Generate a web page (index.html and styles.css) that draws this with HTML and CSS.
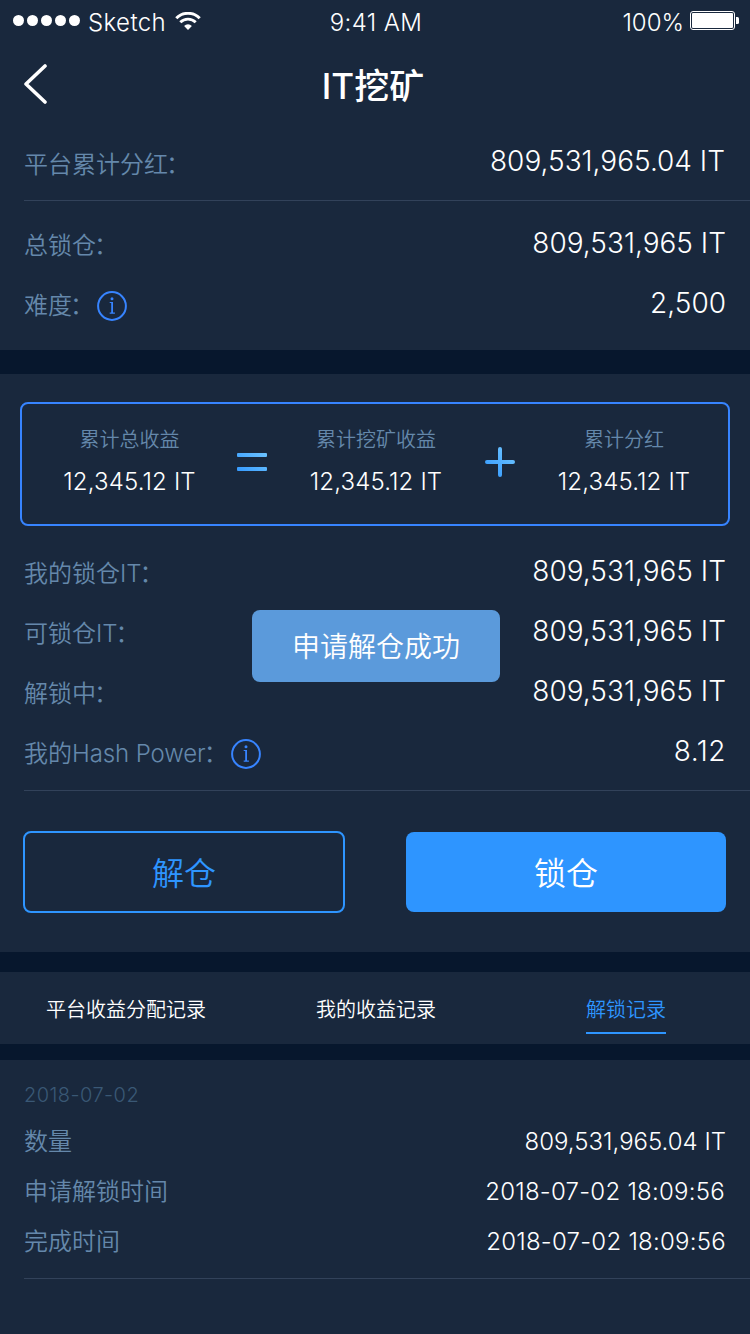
FILE: index.html
```html
<!DOCTYPE html>
<html lang="zh-CN">
<head>
<meta charset="utf-8">
<title>IT挖矿</title>
<link rel="stylesheet" href="styles.css">
</head>
<body>
<div class="app">
  <section class="panel overview">
    <div class="status-bar">
      <div class="carrier">
        <span class="signal"><i></i><i></i><i></i><i></i><i></i></span>
        <span class="carrier-name">Sketch</span>
        <svg class="wifi" width="26" height="18" viewBox="0 0 26 18">
          <path d="M1.3 6.2a16.5 16.5 0 0 1 23.4 0" fill="none" stroke="#fff" stroke-width="3"/>
          <path d="M5.3 10.3a10.9 10.9 0 0 1 15.4 0" fill="none" stroke="#fff" stroke-width="2.8"/>
          <path d="M13 18l-3.9-4.1a5.6 5.6 0 0 1 7.8 0z" fill="#fff"/>
        </svg>
      </div>
      <div class="time">9:41 AM</div>
      <div class="power">
        <span class="power-text">100%</span>
        <svg width="49" height="19" viewBox="0 0 49 19">
          <rect x=".5" y=".5" width="44" height="18" rx="2.5" fill="none" stroke="#fff"/>
          <rect x="2" y="2" width="41" height="15" rx="1" fill="#fff"/>
          <path d="M46 6h1.500q1.500 0 1.500 1.500v4q0 1.500-1.500 1.500h-1.500z" fill="#fff"/>
        </svg>
      </div>
    </div>
    <header class="nav">
      <svg class="back" width="26" height="42" viewBox="0 0 26 42">
        <path d="M23 2L4 20l19 18" fill="none" stroke="#fff" stroke-width="3.600" stroke-linecap="round" stroke-linejoin="round"/>
      </svg>
      <h1 class="title">IT挖矿</h1>
    </header>
    <div class="row row-total"><span class="label">平台累计分红<span class="colon">：</span></span><span class="value">809,531,965.04 IT</span></div>
    <hr class="divider">
    <div class="rows rows-lock">
      <div class="row"><span class="label">总锁仓<span class="colon">：</span></span><span class="value">809,531,965 IT</span></div>
      <div class="row"><span class="label">难度<span class="colon">：</span><svg class="info" width="30" height="30" viewBox="0 0 30 30"><circle cx="15" cy="15" r="13.900"/><path d="M12.700 11h3.300v10.600h1.900v1.100h-5.200v-1.100h1.500v-9.500h-1.500zM13.500 7.700a1.500 1.500 0 1 0 3 0 1.500 1.500 0 1 0-3 0z"/></svg></span><span class="value">2,500</span></div>
    </div>
  </section>

  <section class="panel account">
    <div class="formula">
      <div class="term term-first"><span class="term-label">累计总收益</span><span class="term-value">12,345.12 IT</span></div>
      <svg class="op" width="30" height="30" viewBox="0 0 30 30">
        <defs><linearGradient id="blue" x1="0" y1="30" x2="30" y2="0" gradientUnits="userSpaceOnUse"><stop offset="0" stop-color="#2e95ff"/><stop offset="1" stop-color="#74c9ff"/></linearGradient></defs>
        <path d="M1 6h28a1 1 0 0 1 1 1v2a1 1 0 0 1-1 1H1a1 1 0 0 1-1-1V7a1 1 0 0 1 1-1zM1 20h28a1 1 0 0 1 1 1v2a1 1 0 0 1-1 1H1a1 1 0 0 1-1-1v-2a1 1 0 0 1 1-1z" fill="url(#blue)"/>
      </svg>
      <div class="term"><span class="term-label">累计挖矿收益</span><span class="term-value">12,345.12 IT</span></div>
      <svg class="op" width="30" height="30" viewBox="0 0 30 30">
        <path d="M15 2v26M2 15h26" fill="none" stroke="url(#blue)" stroke-width="4" stroke-linecap="round"/>
      </svg>
      <div class="term"><span class="term-label">累计分红</span><span class="term-value">12,345.12 IT</span></div>
    </div>
    <div class="rows">
      <div class="row"><span class="label">我的锁仓IT<span class="colon">：</span></span><span class="value">809,531,965 IT</span></div>
      <div class="row"><span class="label">可锁仓IT<span class="colon">：</span></span><span class="value">809,531,965 IT</span></div>
      <div class="row"><span class="label">解锁中<span class="colon">：</span></span><span class="value">809,531,965 IT</span></div>
      <div class="row"><span class="label">我的<span class="hash">Hash Power</span><span class="colon">：</span><svg class="info" width="30" height="30" viewBox="0 0 30 30"><circle cx="15" cy="15" r="13.900"/><path d="M12.700 11h3.300v10.600h1.900v1.100h-5.200v-1.100h1.500v-9.500h-1.500zM13.500 7.700a1.500 1.500 0 1 0 3 0 1.500 1.500 0 1 0-3 0z"/></svg></span><span class="value rate">8.12</span></div>
      <div class="toast">申请解仓成功</div>
    </div>
    <hr class="divider account-divider">
    <div class="actions">
      <button class="btn btn-outline">解仓</button>
      <button class="btn btn-solid">锁仓</button>
    </div>
  </section>

  <nav class="panel tabs">
    <a class="tab">平台收益分配记录</a>
    <a class="tab">我的收益记录</a>
    <a class="tab active">解锁记录</a>
  </nav>

  <section class="panel records">
    <div class="date">2018-07-02</div>
    <div class="record"><span class="label">数量</span><span class="record-value amount">809,531,965.04 IT</span></div>
    <div class="record"><span class="label">申请解锁时间</span><span class="record-value stamp applied">2018-07-02 18:09:56</span></div>
    <div class="record"><span class="label">完成时间</span><span class="record-value stamp">2018-07-02 18:09:56</span></div>
    <hr class="divider records-divider">
  </section>
</div>
</body>
</html>
```
FILE: styles.css
```css
* { box-sizing: border-box; }
body {
  margin: 0;
  background: #07172d;
  color: #fff;
  font-family: Inter, "Noto Sans CJK SC", sans-serif;
  font-weight: 350;
}
.app { width: 750px; height: 1334px; overflow: hidden; display: flex; flex-direction: column; }
.panel { background: #19283d; flex: none; }
.divider { height: 1px; border: 0; margin: 0 0 0 24px; background: #32425a; }

.status-bar {
  height: 41px;
  padding: 0 11px 0 13px;
  display: grid;
  grid-template-columns: 1fr auto 1fr;
  font-size: 24px;
  line-height: 46px;
}
.carrier { display: flex; align-items: center; }
.signal { display: flex; gap: 3px; margin-right: 8px; }
.signal i { width: 11px; height: 11px; border-radius: 50%; background: #fff; }
.carrier-name { height: 41px; width: 87px; letter-spacing: .4px; }
.time { height: 41px; letter-spacing: .4px; }
.power { display: flex; align-items: center; justify-content: flex-end; gap: 6px; }
.power-text { height: 41px; }

.nav { height: 87px; padding: 0 24px; display: grid; grid-template-columns: 40px 1fr 40px; align-items: center; }
.back { margin-left: -2px; }
.title { margin: 2px 4px 0 0; font-size: 35px; line-height: 50px; font-weight: 500; text-align: center; }

.overview { height: 350px; margin-bottom: 24px; }
.row { height: 60px; padding: 0 24px; display: flex; justify-content: space-between; align-items: center; }
.row-total { height: 72px; padding-bottom: 7px; }
.rows-lock { padding-top: 12px; }
.label { display: flex; align-items: center; font-size: 24px; line-height: 34px; color: #6588ab; }
.row .label { margin-top: 6px; }
.row-total .label { margin-top: 8px; }
.row-total .value { margin-right: 1px; }
.value { font-size: 28px; line-height: 40px; }
.rate { letter-spacing: .5px; }
.colon { width: 24px; margin-left: -2px; margin-right: 2px; }
.hash { letter-spacing: -.1px; }
.info { margin-left: 1px; fill: #3784ff; }
.info circle { fill: none; stroke: #3784ff; stroke-width: 2; }

.account { height: 578px; margin-bottom: 20px; padding-top: 28px; }
.formula {
  height: 124px;
  margin: 0 20px 15px;
  padding: 23px 0 0 17px;
  border: 2px solid #3784ff;
  border-radius: 8px;
  display: grid;
  grid-template-columns: 178px 30px 178px 30px 178px;
  column-gap: 20px;
}
.term { display: flex; flex-direction: column; align-items: center; }
.term-first { padding-left: 3px; }
.term-label { font-size: 20px; line-height: 26px; color: #6588ab; }
.term-value { margin-top: 14px; font-size: 24px; line-height: 30px; letter-spacing: .15px; }
.op { margin-top: 20px; }
.rows { position: relative; }
.toast {
  position: absolute;
  left: 252px;
  top: 69px;
  width: 248px;
  height: 72px;
  border-radius: 8px;
  background: #5b9adb;
  font-size: 28px;
  line-height: 74px;
  text-align: center;
}
.account-divider { margin-top: 9px; }
.actions { padding: 40px 24px 0 23px; display: flex; justify-content: space-between; align-items: center; }
.btn { border: 0; border-radius: 8px; padding: 4px 0 0; color: #fff; font: 350 32px/74px Inter, "Noto Sans CJK SC", sans-serif; }
.btn-outline { width: 322px; height: 82px; border: 2px solid #2e95ff; background: none; color: #2e95ff; }
.btn-solid { width: 320px; height: 80px; background: #2e95ff; }

.tabs { height: 72px; margin-bottom: 16px; padding-left: 46px; display: grid; grid-template-columns: 270px 270px auto; justify-content: start; }
.tab { height: 62px; font-size: 20px; line-height: 76px; }
.tab.active { color: #2e95ff; border-bottom: 2px solid #2e95ff; }

.records { height: 274px; padding-top: 22px; }
.date { height: 35px; padding-left: 24px; font-size: 20px; line-height: 26px; letter-spacing: .45px; color: #3a5875; }
.record { height: 50px; padding: 0 24px; display: flex; justify-content: space-between; align-items: center; }
.record-value { font-size: 24px; line-height: 34px; }
.stamp { letter-spacing: .25px; }
.applied { margin-right: 1px; }
.records-divider { margin-top: 11px; }
```
